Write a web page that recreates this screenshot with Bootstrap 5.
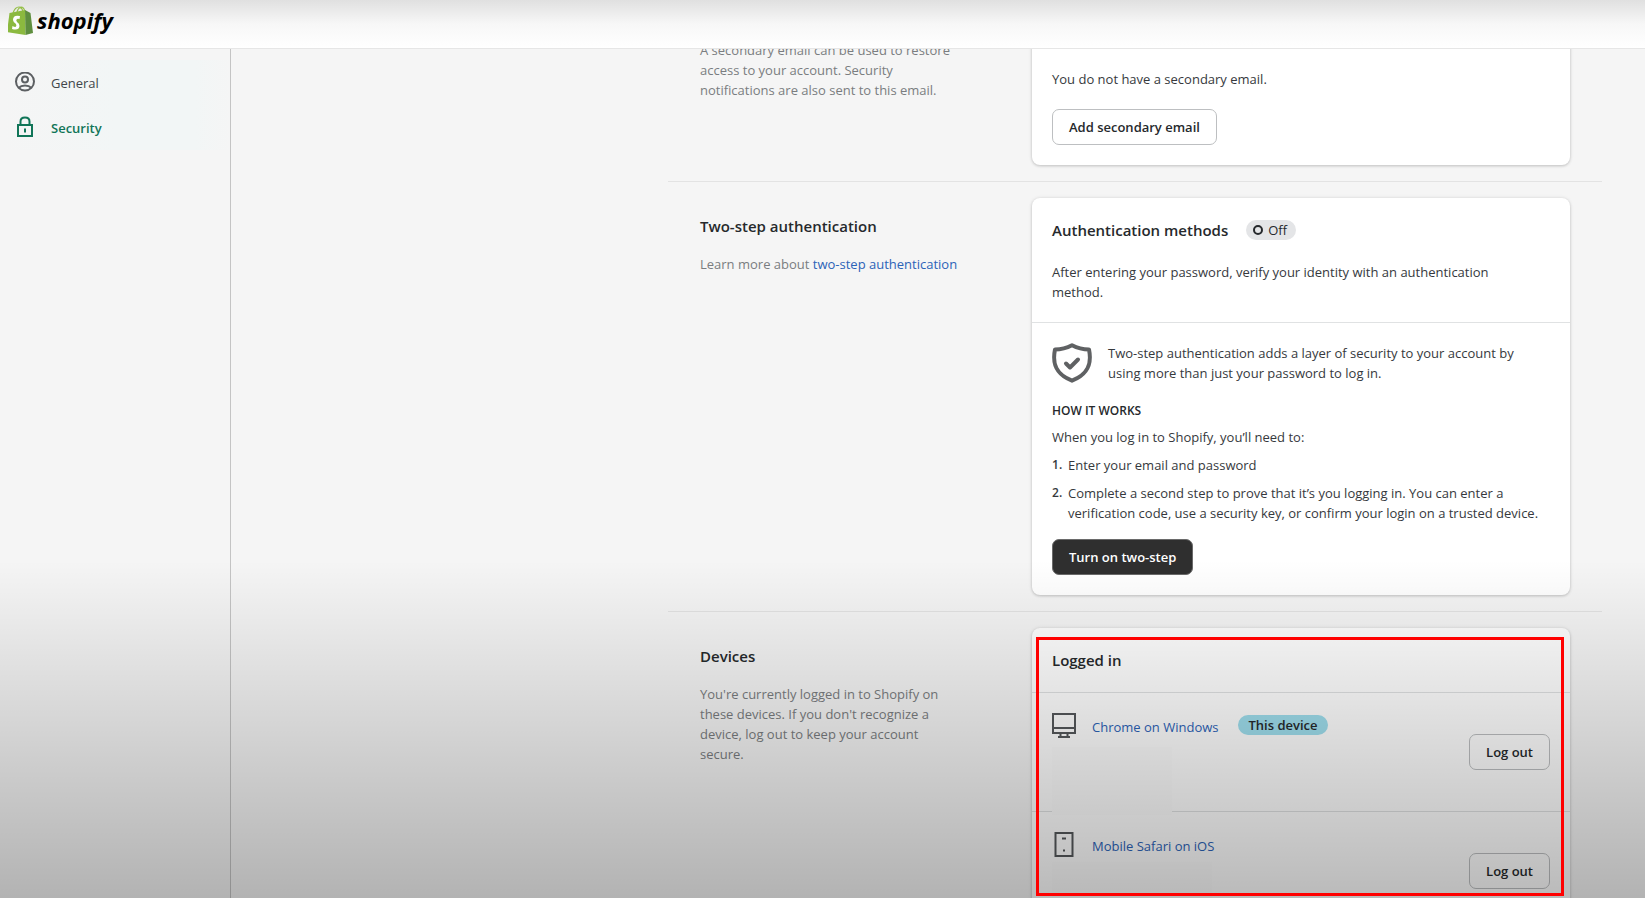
<!DOCTYPE html>
<html lang="en">
<head>
<meta charset="utf-8">
<meta name="viewport" content="width=device-width, initial-scale=1">
<title>Shopify account security</title>
<link rel="stylesheet" href="https://cdn.jsdelivr.net/npm/bootstrap@5.3.0/dist/css/bootstrap.min.css">
<style>
body{font-family:"Open Sans","Noto Sans",sans-serif;font-size:13px;line-height:20px;color:#36393d;background:#f5f5f5}
a{text-decoration:none;color:#2c63b8}
.topbar{height:49px;background:linear-gradient(#e0e0e0,#f7f7f7 50%,#fff);border-bottom:1px solid #e6e6e6;z-index:5}
.wordmark{font:italic 700 22px "Open Sans",sans-serif}
.body-row{min-height:0}
.sidebar{width:231px;padding-top:11px;border-right:1px solid #c4c4c4}
.side-link{height:45px;padding-left:14px;gap:15px;color:#41464b;background:linear-gradient(90deg,transparent,#f2f6f6 50%,#f2f6f6 85%,transparent)}
.side-link.active{color:#117558;font-weight:600}
.settings{max-width:934px;margin-right:43px;margin-top:-36px}
.section{padding:16px 32px;border-bottom:1px solid #e3e3e3}
.section.last{border:0}
.about{width:332px;padding:16px 72px 0 0;color:#7a7d80}
.about.scrolled{padding:11px 64px 0 0}
.heading{font-size:15px;line-height:24px;font-weight:600;color:#26292c;margin:0}
.about .heading{margin-bottom:16px}
.panel{background:#fff;border-radius:8px;box-shadow:0 0 4px rgba(0,0,0,.08),0 1px 3px rgba(0,0,0,.18)}
.panel-part{padding:20px}
.panel-part.scrolled{padding-top:40px}
.panel-part + .panel-part{border-top:1px solid #e0e2e3}
.title-row{gap:18px;margin-bottom:20px}
.copy{margin:0;padding-right:24px}
.pill{border-radius:10px;line-height:20px;color:#26292c;padding:0 10px}
.pill.off{background:#e4e5e7;padding:0 9px 0 6px}
.pill.here{background:#9fdfee;font-weight:600;margin:2px 0 0 2px}
.action{height:36px;padding:0 16px;font-size:13px;line-height:20px;font-weight:600;color:#26292c;border:1px solid #bdbfc1;border-radius:7px}
.action-dark,.action-dark:hover{background:#2f2f2f;color:#fff;border-color:#6a6a6a}
.scrolled .action{margin-top:20px}
.caps{font-size:12px;line-height:20px;font-weight:600;color:#26292c;margin:18px 0 6px}
.steps{list-style:none;counter-reset:step}
.steps li{counter-increment:step;display:flex;margin-bottom:8px}
.steps li:last-child{margin-bottom:16px}
.steps li::before{content:counter(step) ".";width:16px;flex:none;font-size:12px;font-weight:600}
.device{position:relative;height:119px}
.device-name{padding-top:4px;margin-right:18px}
.redacted{position:absolute;left:20px;top:54px;width:120px;height:68px;background:#fdfdfd;z-index:1}
.redacted.wide{top:50px;width:160px}
.mark-box{position:absolute;left:4px;right:6px;top:9px;height:259px;border:3px solid #f00;z-index:4;pointer-events:none}
.shade{position:absolute;left:0;right:0;bottom:0;height:338px;background:linear-gradient(transparent,rgba(0,0,0,.27));pointer-events:none;z-index:3}
</style>
</head>
<body class="vh-100 overflow-hidden d-flex flex-column position-relative">
<header class="topbar position-relative flex-shrink-0 px-2">
<a href="#" aria-label="Shopify home">
<svg width="110" height="44" viewBox="0 0 110 44">
<path d="M5 13Q7 7 11 7Q14 7 15 12M9 12Q10 8 13 7Q16 7 17 12" fill="none" stroke="#95bf47" stroke-width="1.200"/>
<path d="M1.500 13 17 10 17.500 35-1 32Z" fill="#8bb93f"/>
<path d="M17 10 22.500 13 25 33 17.500 35Z" fill="#5e8e3e"/>
<path d="M12 16Q5 14.500 5 20Q5 22 8 24Q9 26 7.500 27Q6 27 4.500 26L4 29Q11 31 11.500 26Q11.500 23.500 9 22Q7.500 20 9 19Q10 18.500 11.500 19Z" fill="#fff"/>
<text class="wordmark" x="29" y="29" fill="#000">shopify</text>
</svg>
</a>
</header>
<div class="body-row d-flex flex-fill">
<nav class="sidebar flex-shrink-0">
<a class="side-link d-flex align-items-center" href="#">
<svg width="22" height="22" viewBox="0 0 22 22" fill="none" stroke="#5c5f62" stroke-width="2"><circle cx="11" cy="9.500" r="9"/><circle cx="11" cy="7.500" r="3"/><path d="M4.500 16Q7 13.500 11 13.500Q15 13.500 17.500 16"/></svg>
General</a>
<a class="side-link active d-flex align-items-center" href="#">
<svg width="22" height="24" viewBox="0 0 22 24" fill="none" stroke="#117558" stroke-width="2"><rect x="4" y="9" width="14" height="11"/><path d="M6.500 9V5.500Q6.500 1.500 11 1.500Q15.500 1.500 15.500 5.500V9M11 12.500V16.500"/></svg>
Security</a>
</nav>
<main class="flex-fill overflow-hidden">
<div class="settings ms-auto">
<section class="section d-flex">
<div class="about scrolled flex-shrink-0"><p class="mb-0">A secondary email can be used to restore access to your account. Security notifications are also sent to this email.</p></div>
<div class="panel flex-fill"><div class="panel-part scrolled">
<p class="mb-0">You do not have a secondary email.</p>
<button type="button" class="btn action d-block">Add secondary email</button>
</div></div>
</section>
<section class="section d-flex">
<div class="about flex-shrink-0">
<h2 class="heading">Two-step authentication</h2>
<p class="mb-0 text-nowrap">Learn more about <a href="#">two-step authentication</a></p>
</div>
<div class="panel flex-fill">
<div class="panel-part">
<div class="title-row d-flex align-items-center">
<h3 class="heading">Authentication methods</h3>
<span class="pill off d-flex align-items-center gap-1"><svg width="12" height="12" viewBox="0 0 12 12"><circle cx="6" cy="6" r="4" fill="none" stroke="#26292c" stroke-width="2"/></svg>Off</span>
</div>
<p class="copy">After entering your password, verify your identity with an authentication method.</p>
</div>
<div class="panel-part">
<div class="d-flex gap-3">
<svg class="flex-shrink-0" width="40" height="40" viewBox="0 0 40 40" fill="none" stroke="#5f6163" stroke-width="4" stroke-linejoin="round"><path d="M20 2.300Q12 6.500 3 6.500C0 21 4 31.500 20 37.700C36 31.500 40 21 37 6.500Q28 6.500 20 2.300Z"/><path d="M14 20.500 18 24.500 26 16.500" stroke-linecap="round"/></svg>
<p class="copy">Two-step authentication adds a layer of security to your account by using more than just your password to log in.</p>
</div>
<h4 class="caps">HOW IT WORKS</h4>
<p class="mb-2">When you log in to Shopify, you’ll need to:</p>
<ol class="steps p-0 m-0">
<li><span>Enter your email and password</span></li>
<li><span>Complete a second step to prove that it’s you logging in. You can enter a verification code, use a security key, or confirm your login on a trusted device.</span></li>
</ol>
<button type="button" class="btn action action-dark d-block">Turn on two-step</button>
</div>
</div>
</section>
<section class="section last d-flex">
<div class="about flex-shrink-0">
<h2 class="heading">Devices</h2>
<p class="mb-0">You're currently logged in to Shopify on these devices. If you don't recognize a device, log out to keep your account secure.</p>
</div>
<div class="panel flex-fill position-relative">
<div class="panel-part"><h3 class="heading">Logged in</h3></div>
<div class="panel-part device d-flex">
<svg class="flex-shrink-0 me-3" width="24" height="26" viewBox="0 0 24 26" fill="none" stroke="#55585b" stroke-width="2"><path d="M1 1H23V20H1ZM1 15H23M8.500 20V24M15.500 20V24M6 24H18"/></svg>
<a href="#" class="device-name">Chrome on Windows</a>
<span class="pill here align-self-start">This device</span>
<button type="button" class="btn action align-self-center ms-auto">Log out</button>
<div class="redacted"></div>
</div>
<div class="panel-part device d-flex">
<svg class="flex-shrink-0 me-3" width="24" height="26" viewBox="0 0 24 26" fill="none" stroke="#55585b" stroke-width="2"><path d="M3.500 1H20.500V24H3.500ZM10 6.500H14M11 18.500H13"/></svg>
<a href="#" class="device-name">Mobile Safari on iOS</a>
<button type="button" class="btn action align-self-center ms-auto">Log out</button>
<div class="redacted wide"></div>
</div>
<div class="mark-box"></div>
</div>
</section>
</div>
</main>
</div>
<div class="shade"></div>
<script src="https://cdn.jsdelivr.net/npm/bootstrap@5.3.0/dist/js/bootstrap.bundle.min.js"></script>
</body>
</html>
